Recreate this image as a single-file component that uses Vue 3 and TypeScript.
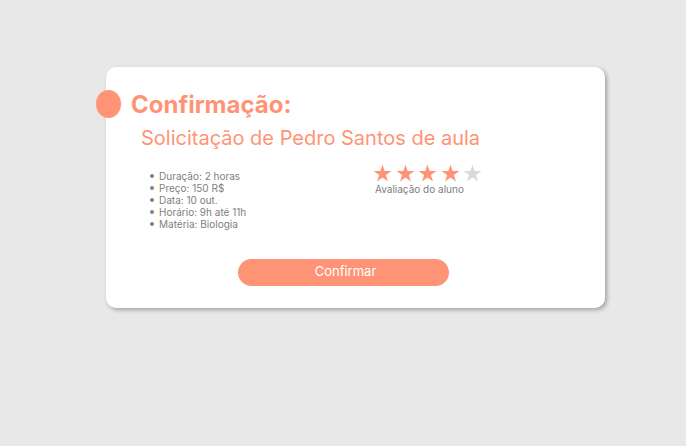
<script setup lang="ts">
import { ref } from 'vue'

const student = 'Pedro Santos'
const rating = 4
const details: string[] = [
  'Duração: 2 horas',
  'Preço: 150 R$',
  'Data: 10 out.',
  'Horário: 9h até 11h',
  'Matéria: Biologia',
]
const confirmed = ref(false)
</script>

<template>
  <main class="page">
    <section class="card">
      <header class="heading">
        <span class="dot"></span>
        <h1>Confirmação:</h1>
      </header>
      <h2>Solicitação de {{ student }} de aula</h2>
      <div class="info">
        <ul class="details">
          <li v-for="item in details" :key="item">{{ item }}</li>
        </ul>
        <div class="review">
          <div class="stars">
            <svg
              v-for="n in 5"
              :key="n"
              class="star"
              :class="{ filled: n <= rating }"
              viewBox="0 0 19 18"
              aria-hidden="true"
            >
              <path d="M9.5 0.5L11.6 7H18.4L12.9 11L15 17.5L9.5 13.5L4 17.5L6.1 11L0.6 7H7.4Z" />
            </svg>
          </div>
          <p>Avaliação do aluno</p>
        </div>
      </div>
      <button type="button" class="confirm" @click="confirmed = true">Confirmar</button>
    </section>
  </main>
</template>

<style>
body {
  margin: 0;
  background: #e8e8e8;
}
</style>

<style scoped>
.page {
  padding: 67px 81px 67px 106px;
  font-family: Inter, "Liberation Sans", sans-serif;
  color: #808080;
}

.card {
  display: flex;
  flex-direction: column;
  padding: 22px 24px;
  border-radius: 10px;
  background: #fff;
  box-shadow: 2px 2px 4px rgba(0, 0, 0, 0.3);
}

.heading {
  display: flex;
  align-items: center;
  gap: 10px;
  margin-left: -34px;
}

.dot {
  width: 25px;
  height: 28px;
  border-radius: 50%;
  background: #ff9376;
}

h1,
h2,
p,
ul {
  margin: 0;
}

h1 {
  padding-top: 2px;
  font-size: 24px;
  line-height: 28px;
  font-weight: 700;
  color: #ff9376;
}

h2 {
  margin-top: 6px;
  padding-left: 11px;
  font-size: 20px;
  line-height: 26px;
  font-weight: 400;
  color: #ff9376;
}

.info {
  display: grid;
  grid-template-columns: 243px 1fr;
  margin-top: 12px;
  font-size: 10px;
  line-height: 12px;
}

.details {
  padding: 7px 0 0 20px;
  list-style: none;
}

.details li {
  display: flex;
  align-items: center;
  gap: 5px;
}

.details li::before {
  content: "";
  width: 4px;
  height: 4px;
  border-radius: 50%;
  background: currentColor;
}

.stars {
  display: flex;
  justify-content: space-between;
  width: 109px;
  padding-top: 1px;
}

.star {
  width: 19px;
  height: 18px;
  fill: #d9d9d9;
}

.star.filled {
  fill: #ff9376;
}

.review p {
  padding: 1px 0 0 2px;
}

.confirm {
  align-self: center;
  width: 47%;
  height: 27px;
  margin: 29px 24px 0 0;
  padding: 0 0 3px 4px;
  border: 0;
  border-radius: 14px;
  background: #ff9376;
  color: #fff;
  font: 400 13px/16px Inter, "Liberation Sans", sans-serif;
  cursor: pointer;
}
</style>
